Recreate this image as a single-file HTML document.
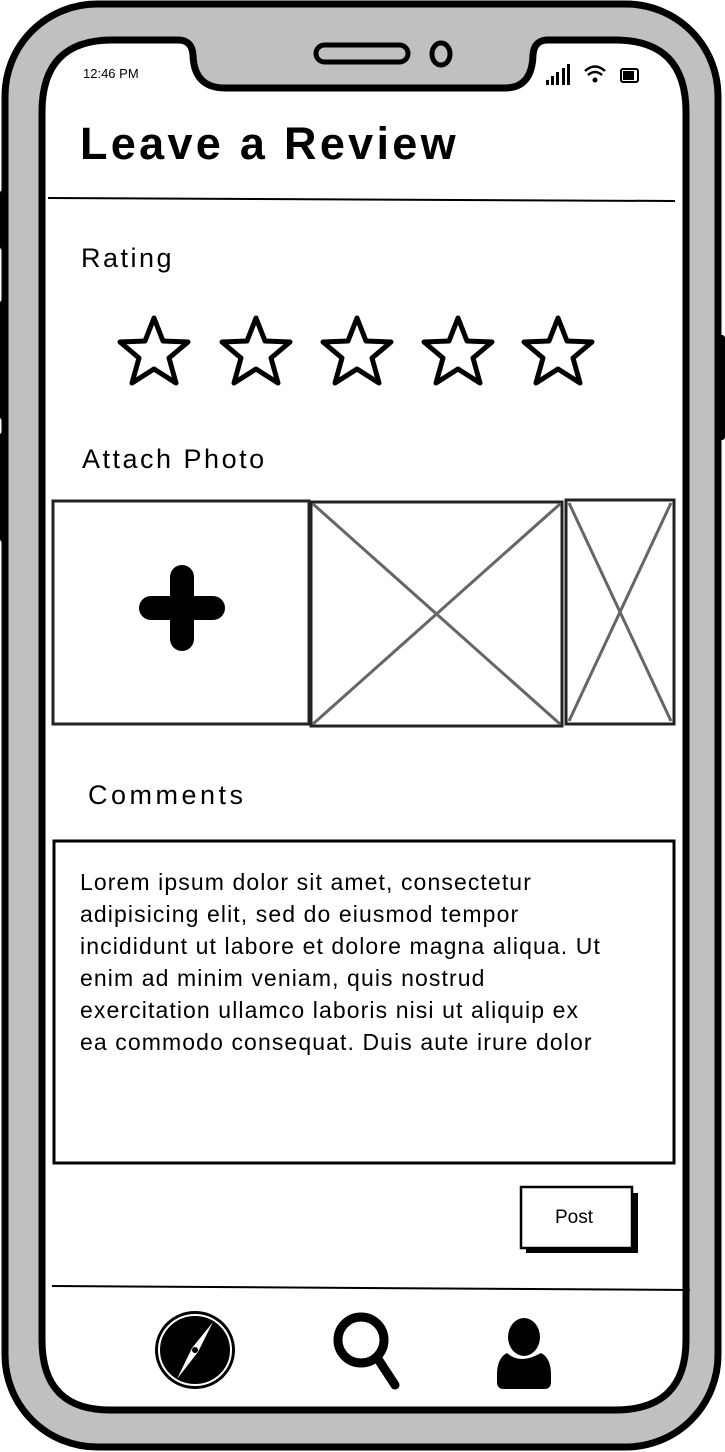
<!DOCTYPE html>
<html><head><meta charset="utf-8"><style>
body{margin:0;width:725px;height:1452px;position:relative;background:#fff;font-family:"Liberation Sans",sans-serif;overflow:hidden}
.t{position:absolute;color:#000;white-space:nowrap}
</style></head><body>
<svg width="725" height="1452" style="position:absolute;left:0;top:0">
<rect x="0" y="190" width="8" height="60" rx="3" fill="#000"/>
<rect x="0" y="300" width="8" height="120" rx="3" fill="#000"/>
<rect x="0" y="432" width="8" height="110" rx="3" fill="#000"/>
<rect x="713" y="335" width="12" height="105" rx="3" fill="#000"/>
<rect x="5" y="4" width="713" height="1443" rx="92" fill="#c0c0c0" stroke="#000" stroke-width="7"/>
<path d="M112 40 H178 Q192 40 193 55 Q194 88 225 88 H505 Q532 88 533 55 Q534 40 548 40 H615 Q686 40 686 112 V1340 Q686 1410 615 1410 H110 Q42 1410 42 1340 V112 Q42 40 112 40 Z" fill="#fff" stroke="#000" stroke-width="7"/>
<rect x="316" y="45" width="92" height="17" rx="8.5" fill="none" stroke="#000" stroke-width="5"/>
<ellipse cx="441" cy="54" rx="9" ry="11" fill="none" stroke="#000" stroke-width="5"/>
<g fill="#000"><rect x="546" y="80" width="3" height="5"/><rect x="551" y="76" width="3" height="9"/><rect x="556" y="72" width="3" height="13"/><rect x="562" y="68" width="3" height="17"/><rect x="567" y="64" width="3" height="21"/></g>
<g fill="none" stroke="#000" stroke-width="2.5"><path d="M585 71 Q595 62 605 71"/><path d="M588 75 Q595 69 602 75"/></g>
<circle cx="595" cy="80" r="2.5" fill="#000"/>
<rect x="621" y="69" width="17" height="13" rx="2" fill="none" stroke="#000" stroke-width="2"/><rect x="623" y="71" width="11" height="9" fill="#000"/>
<line x1="48" y1="198" x2="675" y2="201" stroke="#000" stroke-width="2"/>
<g fill="none" stroke="#000" stroke-width="5" stroke-linejoin="round">
<path id="st" d="M154 318 L163 341 L188 342 L169 358 L176 383 L154 369 L132 383 L139 358 L120 342 L145 341 Z"/>
<use href="#st" x="102"/><use href="#st" x="203"/><use href="#st" x="304"/><use href="#st" x="404"/>
</g>
<g fill="none" stroke="#222" stroke-width="3">
<rect x="53" y="501" width="256" height="223"/>
<rect x="311" y="502" width="251" height="224"/>
<rect x="566" y="500" width="108" height="224"/>
</g>
<g stroke="#666" stroke-width="3"><line x1="313" y1="504" x2="560" y2="724"/><line x1="560" y1="504" x2="313" y2="724"/><line x1="569" y1="503" x2="671" y2="721"/><line x1="671" y1="503" x2="569" y2="721"/></g>
<g stroke="#000" stroke-width="24" stroke-linecap="round"><line x1="182" y1="577" x2="182" y2="639"/><line x1="151" y1="608" x2="213" y2="608"/></g>
<rect x="54" y="841" width="620" height="322" fill="none" stroke="#000" stroke-width="3"/>
<rect x="526" y="1193" width="112" height="60" fill="#000"/>
<rect x="521" y="1187" width="111" height="61" fill="#fff" stroke="#000" stroke-width="2.5"/>
<line x1="52" y1="1286" x2="690" y2="1290" stroke="#000" stroke-width="2"/>
<ellipse cx="195" cy="1350" rx="40" ry="39" fill="#000"/>
<ellipse cx="195" cy="1350" rx="36" ry="35" fill="none" stroke="#fff" stroke-width="2"/>
<path d="M213 1322 L198 1352 L177 1379 L192 1348 Z" fill="#fff"/>
<circle cx="195" cy="1350" r="3" fill="#000"/>
<circle cx="361" cy="1340" r="23" fill="none" stroke="#000" stroke-width="9"/>
<line x1="378" y1="1359" x2="395" y2="1385" stroke="#000" stroke-width="9" stroke-linecap="round"/>
<ellipse cx="524" cy="1337" rx="16" ry="19" fill="#000"/>
<path d="M507 1353 Q520 1365 541 1353 Q551 1358 551 1375 V1382 Q551 1389 544 1389 H504 Q497 1389 497 1382 V1375 Q497 1358 507 1353 Z" fill="#000"/>
</svg>
<div class="t" style="left:83px;top:66px;font-size:13px">12:46 PM</div>
<div class="t" style="left:80px;top:118px;font-size:45px;font-weight:bold;letter-spacing:3.3px">Leave a Review</div>
<div class="t" style="left:81px;top:243px;font-size:27px;letter-spacing:2.5px">Rating</div>
<div class="t" style="left:82px;top:444px;font-size:27px;letter-spacing:2.5px">Attach Photo</div>
<div class="t" style="left:88px;top:780px;font-size:27px;letter-spacing:3.5px">Comments</div>
<div class="t" style="left:80px;top:866px;font-size:23px;line-height:32px;letter-spacing:1.1px;height:196px;overflow:hidden">Lorem ipsum dolor sit amet, consectetur<br>adipisicing elit, sed do eiusmod tempor<br>incididunt ut labore et dolore magna aliqua. Ut<br>enim ad minim veniam, quis nostrud<br>exercitation ullamco laboris nisi ut aliquip ex<br>ea commodo consequat. Duis aute irure dolor<br>in reprehenderit in voluptate velit esse cillum</div>
<div class="t" style="left:555px;top:1207px;font-size:19px">Post</div>
</body></html>
